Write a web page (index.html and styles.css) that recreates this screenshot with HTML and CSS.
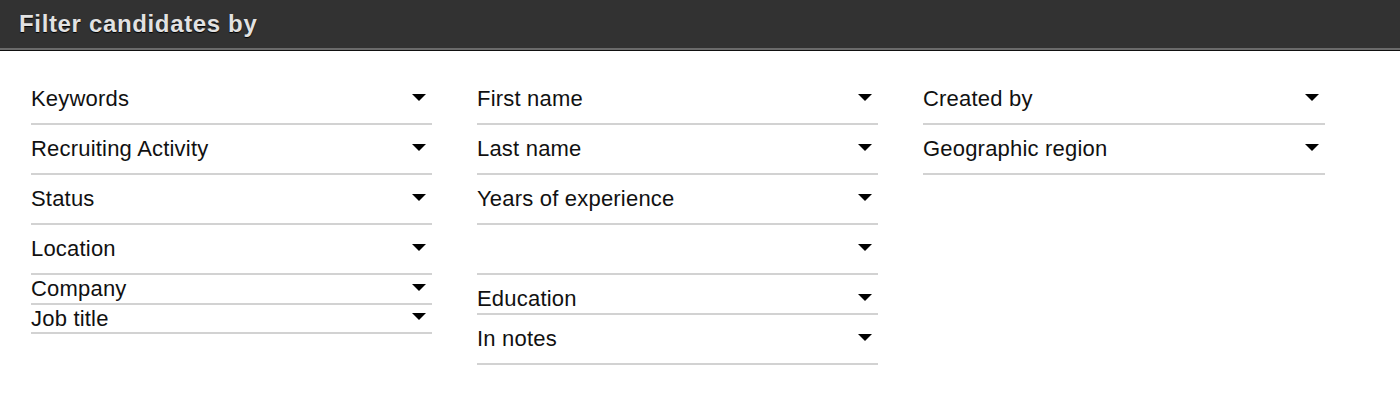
FILE: index.html
```html
<!DOCTYPE html>
<html>
<head>
<meta charset="utf-8">
<link rel="stylesheet" href="styles.css">
</head>
<body>
<div class="header"><h1 class="title">Filter candidates by</h1></div>
<div class="filters">
  <div class="col">
    <div class="row"><span class="label">Keywords</span><span class="caret"></span></div>
    <div class="row"><span class="label">Recruiting Activity</span><span class="caret"></span></div>
    <div class="row"><span class="label">Status</span><span class="caret"></span></div>
    <div class="row"><span class="label">Location</span><span class="caret"></span></div>
    <div class="row row-compact"><span class="label">Company</span><span class="caret"></span></div>
    <div class="row row-compact row-tight"><span class="label">Job title</span><span class="caret"></span></div>
  </div>
  <div class="col">
    <div class="row"><span class="label">First name</span><span class="caret"></span></div>
    <div class="row"><span class="label">Last name</span><span class="caret"></span></div>
    <div class="row"><span class="label">Years of experience</span><span class="caret"></span></div>
    <div class="row"><span class="label"></span><span class="caret"></span></div>
    <div class="row row-offset"><span class="label">Education</span><span class="caret"></span></div>
    <div class="row"><span class="label">In notes</span><span class="caret"></span></div>
  </div>
  <div class="col">
    <div class="row"><span class="label">Created by</span><span class="caret"></span></div>
    <div class="row"><span class="label">Geographic region</span><span class="caret"></span></div>
  </div>
</div>
</body>
</html>
```

FILE: styles.css
```css
* { box-sizing: border-box; }
html, body {
  margin: 0;
  padding: 0;
  background: #fff;
  font-family: "Liberation Sans", Arial, Helvetica, sans-serif;
}
.header {
  height: 51px;
  background: #323232;
  border-bottom: 1px solid #111;
  box-shadow: inset 0 -2px 0 #6a6a6a;
  display: flex;
  align-items: center;
  padding-left: 19px;
  padding-bottom: 3px;
}
.title {
  margin: 0;
  font-size: 24px;
  font-weight: bold;
  letter-spacing: 0.65px;
  color: #e2e2e2;
  text-shadow: 0 1px 1px #000;
}
.filters {
  display: grid;
  grid-template-columns: 401px 401px 402px;
  column-gap: 45px;
  padding: 24px 0 0 31px;
  align-items: start;
}
.col {
  display: flex;
  flex-direction: column;
}
.row {
  height: 50px;
  display: flex;
  align-items: center;
  justify-content: space-between;
  border-bottom: 2px solid #d2d2d2;
  padding-right: 6px;
}
.row-compact {
  height: 30px;
}
.row-tight {
  height: 29px;
}
.row-offset {
  height: 40px;
  padding-top: 10px;
}
.label {
  font-size: 22px;
  letter-spacing: 0.2px;
  color: #111;
}
.caret {
  width: 0;
  height: 0;
  border-left: 7px solid transparent;
  border-right: 7px solid transparent;
  border-top: 7px solid #000;
  margin-top: -4px;
}
```
